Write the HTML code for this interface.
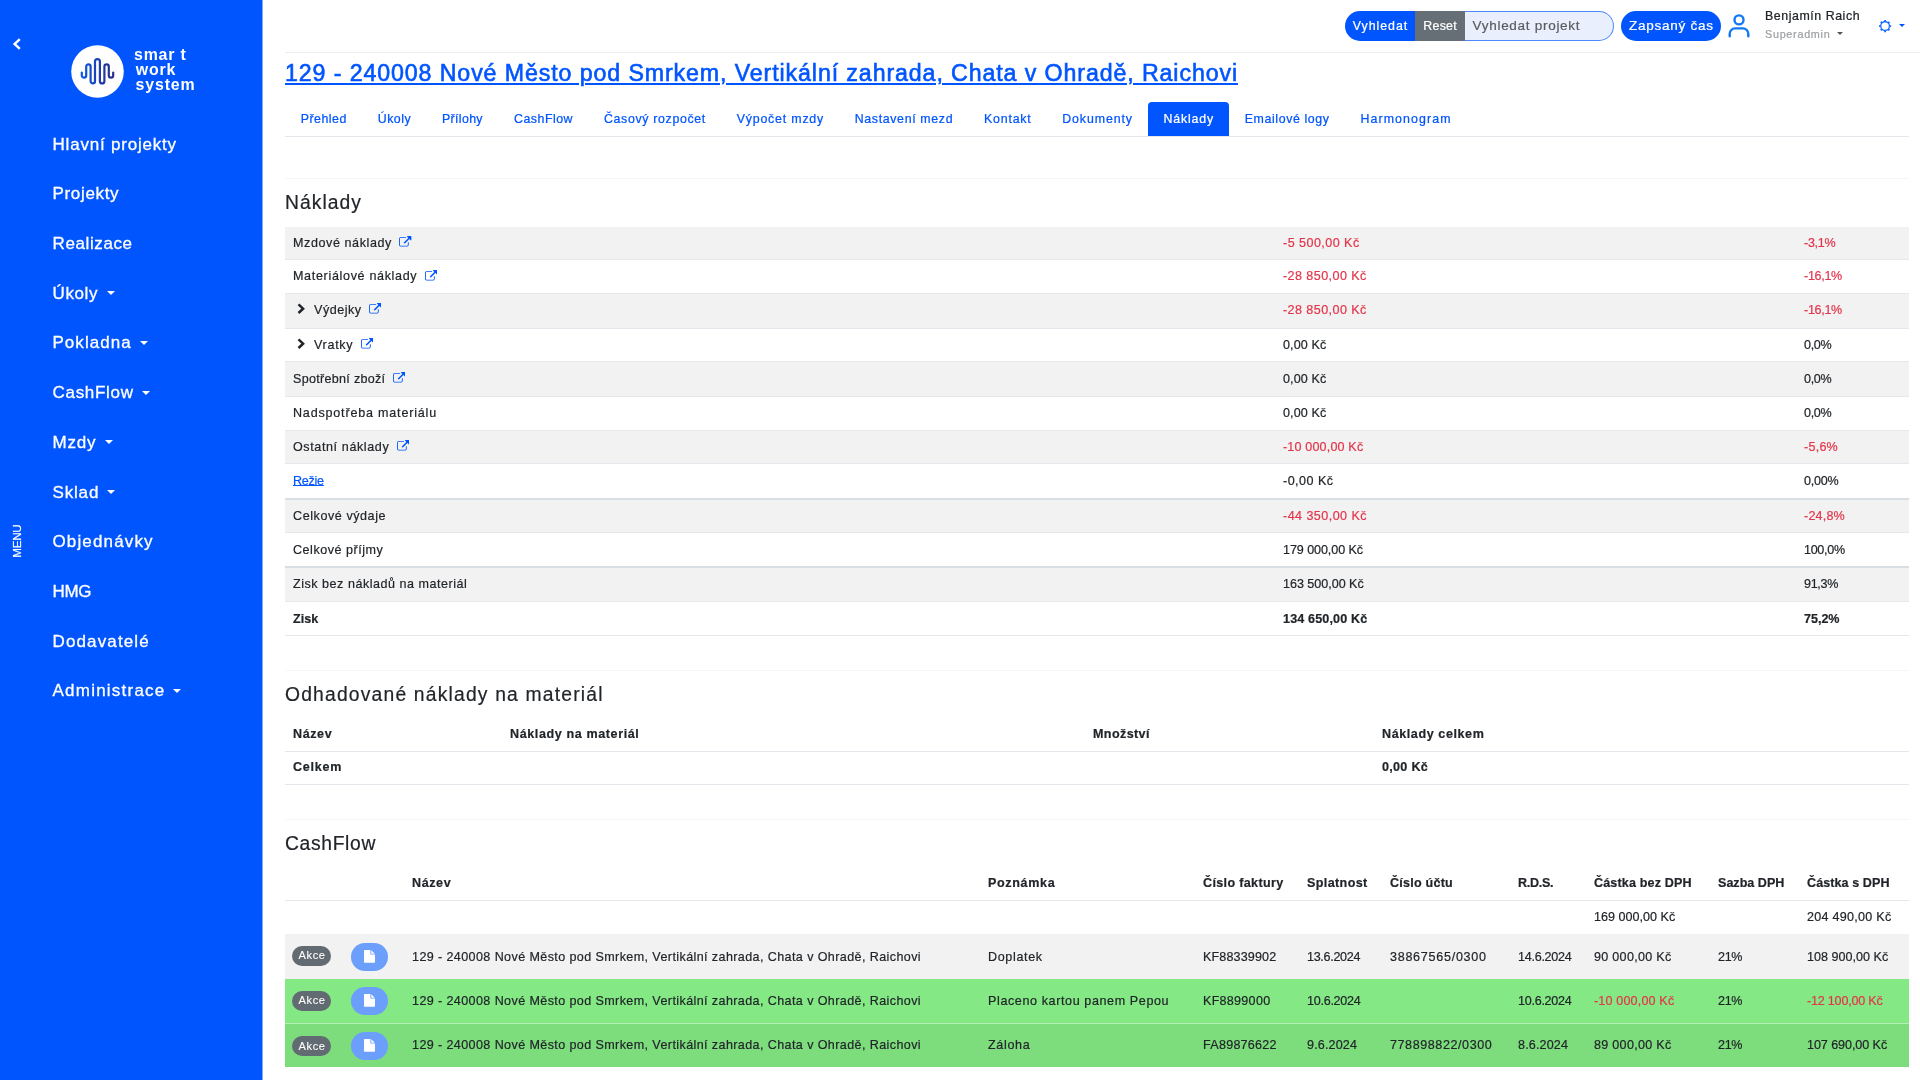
<!DOCTYPE html>
<html lang="cs">
<head>
<meta charset="utf-8">
<title>Smart Work System – Náklady</title>
<style>
*{box-sizing:border-box}
html,body{margin:0;padding:0}
body{width:1920px;height:1080px;overflow:hidden;background:#fff;color:#212529;font-family:"Liberation Sans", sans-serif;font-size:12.55px;line-height:19.5px;position:relative}
a{color:#0055ff}
#app{position:absolute;left:0;top:0;width:1920px;height:1080px;will-change:transform}
.abs{position:absolute}
.t{white-space:nowrap;-webkit-text-stroke:0.2px currentColor}
.m{-webkit-text-stroke:0.02em currentColor}
#title .m{-webkit-text-stroke-width:0.026em}
#side .m,.btn .m{-webkit-text-stroke-width:0.018em}
.akce .m{-webkit-text-stroke-width:.1px}
/* sidebar */
#side{position:absolute;left:0;top:0;width:263px;height:1080px;background:#0055ff;border-right:1px solid #7fa9ff;color:#fff}
#side .logo{position:absolute;left:71px;top:45px;width:53px;height:53px}
#side .brand{position:absolute;left:134px;top:46.5px;font-size:15.93px;line-height:15px;font-weight:700;letter-spacing:.4px}
#side .brand div{height:15px}
#side .brand .t{-webkit-text-stroke:0}
#side ul{list-style:none;margin:0;padding:0;position:absolute;left:52.5px;top:119.8px}
#side li{height:49.68px;line-height:49.68px;font-size:17px;white-space:nowrap}
.caret{display:inline-block;width:0;height:0;border-top:4.8px solid currentColor;border-left:4.8px solid transparent;border-right:4.8px solid transparent;vertical-align:middle}
#side .caret{margin-left:9px;position:relative;top:-1px}
#side .menu{position:absolute;left:16.5px;top:541px;width:0;height:0}
#side .menu div{position:absolute;left:0;top:0;transform:translate(-50%,-50%) rotate(-90deg);font-size:11.68px;line-height:12px;white-space:nowrap}
/* top bar */
.btn{position:absolute;top:11px;height:29.5px;line-height:29.5px;font-size:12.36px;color:#fff;text-align:center;background:#0055ff;white-space:nowrap}
#hline{position:absolute;left:285px;top:51.5px;width:1635px;height:1.5px;background:#eceef0}
/* title */
#title{position:absolute;left:285px;top:55px;font-size:23.18px;line-height:36px;color:#0055ff;text-decoration:underline;text-decoration-thickness:2px;text-underline-offset:1.5px;white-space:nowrap;margin:0;font-weight:400}
/* tabs */
#tabs{position:absolute;left:285px;top:101px;width:1624px;height:36px;border-bottom:1px solid #e3e6ea;display:flex}
#tabs a{display:block;margin-top:1px;height:34px;line-height:33px;padding:0 15.73px;font-size:12.36px;color:#0055ff;text-decoration:none;white-space:nowrap}
#tabs a.on{background:#0055ff;color:#fff;border-radius:4px 4px 0 0}
.hr{position:absolute;left:285px;width:1624px;height:1px;background:#f6f6f7}
h5{position:absolute;left:285px;margin:0;font-weight:400;font-size:19.31px;line-height:24px;white-space:nowrap}
table{position:absolute;left:285px;width:1624px;border-collapse:separate;border-spacing:0;table-layout:fixed}
td,th{padding:0 8px;text-align:left;vertical-align:top;white-space:nowrap;overflow:visible;font-weight:400}
th,.b{font-weight:700}
.neg{color:#e3354a}
#t1 td,#t2 td,#t2 th,#t3 td,#t3 th{height:var(--h);padding-top:var(--p,6px);border-bottom:1px solid #e4e7eb}
tr{height:var(--h)}
tr.s td{background:#f2f2f2}
tr.k td{border-bottom:2px solid #d9dee4 !important}
tr.nb td{border-bottom:0 !important}
.ext{width:12.4px;height:12.4px;fill:#0055ff;margin-left:8px;vertical-align:-2.5px}
.chev{width:8px;height:11.4px;margin:0 9px 0 4px;vertical-align:-1.8px}
#t3 tr.r td{padding-top:var(--p,12px);border-bottom:0}
#t3 tr.g1 td{background:#84e884;border-bottom:1px solid #b5efb5}
#t3 tr.g2 td{background:#7ddd7d}
.akce{position:relative;top:var(--o,0px);left:-.6px;display:inline-block;width:38.7px;height:20px;line-height:20px;border-radius:10px;background:#626a72;color:#fff;text-align:center;font-size:11.1px;vertical-align:top;margin-top:0.5px}
.doc{position:relative;top:var(--o2,0px);display:inline-block;width:37px;height:28.5px;border-radius:14.25px;background:#6c9ffb;vertical-align:top;margin-top:-3.5px;text-align:center}
.doc svg{width:11px;height:12.8px;fill:#fff;margin-top:7.4px}

tr.b td{font-weight:700}
#t1 a{text-decoration:underline}

</style>
</head>
<body>
<div id="app">
<nav id="side">
  <svg class="abs" style="left:12px;top:37.5px" width="10" height="12" viewBox="0 0 10 12"><path d="M7.8 1.2 L2.6 6 L7.8 10.8" fill="none" stroke="#fff" stroke-width="2.4"/></svg>
  <svg class="logo" viewBox="0 0 53 53">
    <defs><linearGradient id="lg" x1="0" y1="0" x2="1" y2="0"><stop offset="0" stop-color="#0a58e6"/><stop offset=".55" stop-color="#1d3fb0"/><stop offset="1" stop-color="#2b2f86"/></linearGradient></defs>
    <circle cx="26.5" cy="26.5" r="26.3" fill="#fff"/>
    <path transform="translate(-71,-45)" d="M81.8 72.5 V75.4 a2.2 2.2 0 0 0 4.4 0 V66.6 a2.2 2.2 0 0 1 4.4 0 V81.2 a2.2 2.2 0 0 0 4.4 0 V61.5 a2.45 2.45 0 0 1 4.9 0 V81.2 a2.25 2.25 0 0 0 4.5 0 V66.6 a2.2 2.2 0 0 1 4.4 0 V75.4 a2.2 2.2 0 0 0 4.4 0 V72.5" fill="none" stroke="url(#lg)" stroke-width="2.2" stroke-linecap="round"/>
  </svg>
  <div class="brand"><div><span class="t" style="letter-spacing:0.78px;margin-right:-0.78px">smar t</span></div><div style="padding-left:1.8px"><span class="t" style="letter-spacing:0.76px;margin-right:-0.76px">work</span></div><div style="padding-left:1.5px"><span class="t" style="letter-spacing:0.87px;margin-right:-0.87px">system</span></div></div>
  <ul>
    <li><span class="t m" style="letter-spacing:0.79px;margin-right:-0.79px">Hlavní projekty</span></li>
    <li><span class="t m" style="letter-spacing:0.67px;margin-right:-0.67px">Projekty</span></li>
    <li><span class="t m" style="letter-spacing:0.61px;margin-right:-0.61px">Realizace</span></li>
    <li><span class="t m" style="letter-spacing:0.62px;margin-right:-0.62px">Úkoly</span><i class="caret"></i></li>
    <li><span class="t m" style="letter-spacing:1.03px;margin-right:-1.03px">Pokladna</span><i class="caret"></i></li>
    <li><span class="t m" style="letter-spacing:0.70px;margin-right:-0.70px">CashFlow</span><i class="caret"></i></li>
    <li><span class="t m" style="letter-spacing:0.83px;margin-right:-0.83px">Mzdy</span><i class="caret"></i></li>
    <li><span class="t m" style="letter-spacing:0.83px;margin-right:-0.83px">Sklad</span><i class="caret"></i></li>
    <li><span class="t m" style="letter-spacing:1.14px;margin-right:-1.14px">Objednávky</span></li>
    <li><span class="t m" style="letter-spacing:-0.30px;margin-right:0.30px">HMG</span></li>
    <li><span class="t m" style="letter-spacing:1.13px;margin-right:-1.13px">Dodavatelé</span></li>
    <li><span class="t m" style="letter-spacing:1.23px;margin-right:-1.23px">Administrace</span><i class="caret"></i></li>
  </ul>
  <div class="menu"><div><span class="t m" style="letter-spacing:-0.30px;margin-right:0.30px;position:relative;top:-0.5px">MENU</span></div></div>
</nav>
<header>
  <div class="btn" style="left:1345px;width:70px;border-radius:15px 0 0 15px"><span class="t m" style="letter-spacing:0.97px;margin-right:-0.97px;position:relative;top:0.5px">Vyhledat</span></div>
  <div class="btn" style="left:1415px;width:50px;background:#666e76"><span class="t m" style="letter-spacing:0.24px;margin-right:-0.24px;position:relative;top:0.5px">Reset</span></div>
  <div class="abs" style="left:1465px;top:11px;width:149px;height:29.5px;line-height:27.5px;background:#eaeffd;border:1px solid #4d88ff;border-left:0;border-radius:0 15px 15px 0;padding-left:7.5px;color:#595c5f;font-size:13.52px"><span class="t" style="letter-spacing:0.71px;margin-right:-0.71px">Vyhledat projekt</span></div>
  <div class="btn" style="left:1621px;width:100px;border-radius:15px;font-size:13.52px"><span class="t m" style="letter-spacing:0.76px;margin-right:-0.76px">Zapsaný čas</span></div>
  <svg class="abs" style="left:1726.3px;top:13px" width="26" height="26" viewBox="0 0 26 26" fill="none" stroke="#0f78f2" stroke-width="2.4" stroke-linecap="round"><circle cx="13" cy="6.9" r="4.5"/><path d="M3.7 23.2 v-2.4 a5.4 5.4 0 0 1 5.4 -5.4 h7.8 a5.4 5.4 0 0 1 5.4 5.4 v2.4"/></svg>
  <div class="abs" style="left:1765px;top:6px;line-height:19.5px;font-size:12.36px"><span class="t m" style="letter-spacing:0.56px;margin-right:-0.56px;position:relative;top:0.5px">Benjamín Raich</span></div>
  <div class="abs" style="left:1765px;top:26.6px;line-height:16.5px;font-size:10.81px;color:#9a9da0"><span class="t" style="letter-spacing:0.72px;margin-right:-0.72px;position:relative;top:-0.5px">Superadmin</span><i class="caret" style="margin-left:7px;border-width:3.2px 3.2px 0 3.2px;border-top-color:#555;position:relative;top:-2.2px"></i></div>
  <svg class="abs" style="left:1877.9px;top:18.7px" width="14.2" height="14.2" viewBox="0 0 14 14"><g fill="none" stroke="#1a6dff"><circle cx="7" cy="7" r="4.3" stroke-width="1.3"/><g stroke-width="1.9"><path d="M7 1v1.6M7 11.4V13M1 7h1.6M11.4 7H13M2.76 2.76l1.13 1.13M10.1 10.1l1.13 1.13M2.76 11.24l1.13-1.13M10.1 3.9l1.13-1.13"/></g></g></svg>
  <i class="caret abs" style="left:1898.5px;top:24px;border-width:3.4px 3.4px 0 3.4px;color:#0055ff"></i>
  <div id="hline"></div>
</header>
<main>
  <h1 id="title"><span class="t m" style="letter-spacing:0.90px;margin-right:-0.90px">129 - 240008 Nové Město pod Smrkem, Vertikální zahrada, Chata v Ohradě, Raichovi</span></h1>
  <div id="tabs">
    <a><span class="t m" style="letter-spacing:0.51px;margin-right:-0.51px;position:relative;top:0.5px">Přehled</span></a>
    <a><span class="t m" style="letter-spacing:0.46px;margin-right:-0.46px;position:relative;top:0.5px">Úkoly</span></a>
    <a><span class="t m" style="letter-spacing:0.34px;margin-right:-0.34px;position:relative;top:0.5px">Přílohy</span></a>
    <a><span class="t m" style="letter-spacing:0.51px;margin-right:-0.51px;position:relative;top:0.5px">CashFlow</span></a>
    <a><span class="t m" style="letter-spacing:0.66px;margin-right:-0.66px;position:relative;top:0.5px">Časový rozpočet</span></a>
    <a><span class="t m" style="letter-spacing:0.81px;margin-right:-0.81px;position:relative;top:0.5px">Výpočet mzdy</span></a>
    <a><span class="t m" style="letter-spacing:0.66px;margin-right:-0.66px;position:relative;top:0.5px">Nastavení mezd</span></a>
    <a><span class="t m" style="letter-spacing:0.81px;margin-right:-0.81px;position:relative;top:0.5px">Kontakt</span></a>
    <a><span class="t m" style="letter-spacing:0.90px;margin-right:-0.90px;position:relative;top:0.5px">Dokumenty</span></a>
    <a class="on"><span class="t m" style="letter-spacing:0.87px;margin-right:-0.87px;position:relative;top:0.5px">Náklady</span></a>
    <a><span class="t m" style="letter-spacing:0.61px;margin-right:-0.61px;position:relative;top:0.5px">Emailové logy</span></a>
    <a><span class="t m" style="letter-spacing:1.11px;margin-right:-1.11px;position:relative;top:0.5px">Harmonogram</span></a>
  </div>

  <div class="hr" style="top:178px"></div>
  <h5 style="top:191px"><span class="t" style="letter-spacing:1.05px;margin-right:-1.05px">Náklady</span></h5>
  <table id="t1" style="top:227px">
    <colgroup><col style="width:990px"><col style="width:521px"><col style="width:113px"></colgroup>
    <tr class="s" style="--h:33px"><td><span class="t" style="letter-spacing:0.59px;margin-right:-0.59px;position:relative;top:0.5px">Mzdové náklady</span><svg class="ext" viewBox="0 0 1792 1792"><path d="M1408 928v320q0 119-84.500 203.500t-203.500 84.500h-832q-119 0-203.500-84.500t-84.500-203.500v-832q0-119 84.500-203.500t203.500-84.500h704q14 0 23 9t9 23v64q0 14-9 23t-23 9h-704q-66 0-113 47t-47 113v832q0 66 47 113t113 47h832q66 0 113-47t47-113v-320q0-14 9-23t23-9h64q14 0 23 9t9 23zM1792 64v512q0 26-19 45t-45 19-45-19l-176-176-652 652q-10 10-23 10t-23-10l-114-114q-10-10-10-23t10-23l652-652-176-176q-19-19-19-45t19-45 45-19h512q26 0 45 19t19 45z"/></svg></td><td class="neg"><span class="t" style="letter-spacing:0.46px;margin-right:-0.46px;position:relative;top:0.5px">-5 500,00 Kč</span></td><td class="neg"><span class="t" style="letter-spacing:-0.30px;margin-right:0.30px;position:relative;top:0.5px">-3,1%</span></td></tr>
    <tr style="--h:34px;--p:6.6px"><td><span class="t" style="letter-spacing:0.67px;margin-right:-0.67px;position:relative;top:0.5px">Materiálové náklady</span><svg class="ext" viewBox="0 0 1792 1792"><path d="M1408 928v320q0 119-84.500 203.500t-203.500 84.500h-832q-119 0-203.500-84.500t-84.500-203.500v-832q0-119 84.500-203.500t203.500-84.500h704q14 0 23 9t9 23v64q0 14-9 23t-23 9h-704q-66 0-113 47t-47 113v832q0 66 47 113t113 47h832q66 0 113-47t47-113v-320q0-14 9-23t23-9h64q14 0 23 9t9 23zM1792 64v512q0 26-19 45t-45 19-45-19l-176-176-652 652q-10 10-23 10t-23-10l-114-114q-10-10-10-23t10-23l652-652-176-176q-19-19-19-45t19-45 45-19h512q26 0 45 19t19 45z"/></svg></td><td class="neg"><span class="t" style="letter-spacing:0.43px;margin-right:-0.43px;position:relative;top:0.5px">-28 850,00 Kč</span></td><td class="neg"><span class="t" style="letter-spacing:-0.30px;margin-right:0.30px;position:relative;top:0.5px">-16,1%</span></td></tr>
    <tr class="s" style="--h:35px"><td><svg class="chev" viewBox="0 0 8 11"><path d="M1.5 1.2 L6.1 5.5 L1.5 9.8" fill="none" stroke="#212529" stroke-width="2.5"/></svg><span class="t" style="letter-spacing:0.52px;margin-right:-0.52px;position:relative;top:0.5px">Výdejky</span><svg class="ext" viewBox="0 0 1792 1792"><path d="M1408 928v320q0 119-84.500 203.500t-203.500 84.500h-832q-119 0-203.500-84.500t-84.500-203.500v-832q0-119 84.500-203.500t203.500-84.500h704q14 0 23 9t9 23v64q0 14-9 23t-23 9h-704q-66 0-113 47t-47 113v832q0 66 47 113t113 47h832q66 0 113-47t47-113v-320q0-14 9-23t23-9h64q14 0 23 9t9 23zM1792 64v512q0 26-19 45t-45 19-45-19l-176-176-652 652q-10 10-23 10t-23-10l-114-114q-10-10-10-23t10-23l652-652-176-176q-19-19-19-45t19-45 45-19h512q26 0 45 19t19 45z"/></svg></td><td class="neg"><span class="t" style="letter-spacing:0.43px;margin-right:-0.43px;position:relative;top:0.5px">-28 850,00 Kč</span></td><td class="neg"><span class="t" style="letter-spacing:-0.30px;margin-right:0.30px;position:relative;top:0.5px">-16,1%</span></td></tr>
    <tr style="--h:33px"><td><svg class="chev" viewBox="0 0 8 11"><path d="M1.5 1.2 L6.1 5.5 L1.5 9.8" fill="none" stroke="#212529" stroke-width="2.5"/></svg><span class="t" style="letter-spacing:0.70px;margin-right:-0.70px;position:relative;top:0.5px">Vratky</span><svg class="ext" viewBox="0 0 1792 1792"><path d="M1408 928v320q0 119-84.500 203.500t-203.500 84.500h-832q-119 0-203.500-84.500t-84.500-203.500v-832q0-119 84.500-203.500t203.500-84.500h704q14 0 23 9t9 23v64q0 14-9 23t-23 9h-704q-66 0-113 47t-47 113v832q0 66 47 113t113 47h832q66 0 113-47t47-113v-320q0-14 9-23t23-9h64q14 0 23 9t9 23zM1792 64v512q0 26-19 45t-45 19-45-19l-176-176-652 652q-10 10-23 10t-23-10l-114-114q-10-10-10-23t10-23l652-652-176-176q-19-19-19-45t19-45 45-19h512q26 0 45 19t19 45z"/></svg></td><td><span class="t" style="letter-spacing:0.13px;margin-right:-0.13px;position:relative;top:0.5px">0,00 Kč</span></td><td><span class="t" style="letter-spacing:-0.30px;margin-right:0.30px;position:relative;top:0.5px">0,0%</span></td></tr>
    <tr class="s" style="--h:35px;--p:7px"><td><span class="t" style="letter-spacing:0.30px;margin-right:-0.30px;position:relative;top:0.5px">Spotřební zboží</span><svg class="ext" viewBox="0 0 1792 1792"><path d="M1408 928v320q0 119-84.500 203.500t-203.500 84.500h-832q-119 0-203.500-84.500t-84.500-203.500v-832q0-119 84.500-203.500t203.500-84.500h704q14 0 23 9t9 23v64q0 14-9 23t-23 9h-704q-66 0-113 47t-47 113v832q0 66 47 113t113 47h832q66 0 113-47t47-113v-320q0-14 9-23t23-9h64q14 0 23 9t9 23zM1792 64v512q0 26-19 45t-45 19-45-19l-176-176-652 652q-10 10-23 10t-23-10l-114-114q-10-10-10-23t10-23l652-652-176-176q-19-19-19-45t19-45 45-19h512q26 0 45 19t19 45z"/></svg></td><td><span class="t" style="letter-spacing:0.13px;margin-right:-0.13px;position:relative;top:0.5px">0,00 Kč</span></td><td><span class="t" style="letter-spacing:-0.30px;margin-right:0.30px;position:relative;top:0.5px">0,0%</span></td></tr>
    <tr style="--h:34px"><td><span class="t" style="letter-spacing:0.81px;margin-right:-0.81px;position:relative;top:0.5px">Nadspotřeba materiálu</span></td><td><span class="t" style="letter-spacing:0.13px;margin-right:-0.13px;position:relative;top:0.5px">0,00 Kč</span></td><td><span class="t" style="letter-spacing:-0.30px;margin-right:0.30px;position:relative;top:0.5px">0,0%</span></td></tr>
    <tr class="s" style="--h:33px"><td><span class="t" style="letter-spacing:0.61px;margin-right:-0.61px;position:relative;top:0.5px">Ostatní náklady</span><svg class="ext" viewBox="0 0 1792 1792"><path d="M1408 928v320q0 119-84.500 203.500t-203.500 84.500h-832q-119 0-203.500-84.500t-84.500-203.500v-832q0-119 84.500-203.500t203.500-84.500h704q14 0 23 9t9 23v64q0 14-9 23t-23 9h-704q-66 0-113 47t-47 113v832q0 66 47 113t113 47h832q66 0 113-47t47-113v-320q0-14 9-23t23-9h64q14 0 23 9t9 23zM1792 64v512q0 26-19 45t-45 19-45-19l-176-176-652 652q-10 10-23 10t-23-10l-114-114q-10-10-10-23t10-23l652-652-176-176q-19-19-19-45t19-45 45-19h512q26 0 45 19t19 45z"/></svg></td><td class="neg"><span class="t" style="letter-spacing:0.17px;margin-right:-0.17px;position:relative;top:0.5px">-10 000,00 Kč</span></td><td class="neg"><span class="t" style="letter-spacing:0.25px;margin-right:-0.25px;position:relative;top:0.5px">-5,6%</span></td></tr>
    <tr class="k" style="--h:36px;--p:7px"><td><a><span class="t" style="letter-spacing:-0.25px;margin-right:0.25px;position:relative;top:0.5px">Režie</span></a></td><td><span class="t" style="letter-spacing:0.47px;margin-right:-0.47px;position:relative;top:0.5px">-0,00 Kč</span></td><td><span class="t" style="letter-spacing:-0.24px;margin-right:0.24px;position:relative;top:0.5px">0,00%</span></td></tr>
    <tr class="s" style="--h:33px"><td><span class="t" style="letter-spacing:0.57px;margin-right:-0.57px;position:relative;top:0.5px">Celkové výdaje</span></td><td class="neg"><span class="t" style="letter-spacing:0.45px;margin-right:-0.45px;position:relative;top:0.5px">-44 350,00 Kč</span></td><td class="neg"><span class="t" style="letter-spacing:0.20px;margin-right:-0.20px;position:relative;top:0.5px">-24,8%</span></td></tr>
    <tr class="k" style="--h:35px;--p:7px"><td><span class="t" style="letter-spacing:0.53px;margin-right:-0.53px;position:relative;top:0.5px">Celkové příjmy</span></td><td><span class="t" style="letter-spacing:-0.07px;margin-right:0.07px;position:relative;top:0.5px">179 000,00 Kč</span></td><td><span class="t" style="letter-spacing:-0.30px;margin-right:0.30px;position:relative;top:0.5px">100,0%</span></td></tr>
    <tr class="s" style="--h:34px"><td><span class="t" style="letter-spacing:0.52px;margin-right:-0.52px;position:relative;top:0.5px">Zisk bez nákladů na materiál</span></td><td><span class="t" style="letter-spacing:-0.02px;margin-right:0.02px;position:relative;top:0.5px">163 500,00 Kč</span></td><td><span class="t" style="letter-spacing:-0.30px;margin-right:0.30px;position:relative;top:0.5px">91,3%</span></td></tr>
    <tr class="b" style="--h:34px;--p:7px"><td><span class="t" style="letter-spacing:0.03px;margin-right:-0.03px;position:relative;top:0.5px">Zisk</span></td><td><span class="t" style="letter-spacing:0.16px;margin-right:-0.16px;position:relative;top:0.5px">134 650,00 Kč</span></td><td><span class="t" style="letter-spacing:-0.02px;margin-right:0.02px;position:relative;top:0.5px">75,2%</span></td></tr>
  </table>

  <div class="hr" style="top:670px"></div>
  <h5 style="top:682.8px"><span class="t" style="letter-spacing:1.18px;margin-right:-1.18px">Odhadované náklady na materiál</span></h5>
  <table id="t2" style="top:717px">
    <colgroup><col style="width:217px"><col style="width:583px"><col style="width:289px"><col style="width:535px"></colgroup>
    <tr style="--h:35px;--p:7px"><th><span class="t" style="letter-spacing:0.59px;margin-right:-0.59px;position:relative;top:0.5px">Název</span></th><th><span class="t" style="letter-spacing:0.61px;margin-right:-0.61px;position:relative;top:0.5px">Náklady na materiál</span></th><th><span class="t" style="letter-spacing:0.40px;margin-right:-0.40px;position:relative;top:0.5px">Množství</span></th><th><span class="t" style="letter-spacing:0.59px;margin-right:-0.59px;position:relative;top:0.5px">Náklady celkem</span></th></tr>
    <tr class="b" style="--h:33px;--p:5.8px"><td><span class="t" style="letter-spacing:0.74px;margin-right:-0.74px;position:relative;top:0.5px">Celkem</span></td><td></td><td></td><td><span class="t" style="letter-spacing:0.31px;margin-right:-0.31px;position:relative;top:0.5px">0,00 Kč</span></td></tr>
  </table>

  <div class="hr" style="top:819px"></div>
  <h5 style="top:832px"><span class="t" style="letter-spacing:0.65px;margin-right:-0.65px">CashFlow</span></h5>
  <table id="t3" style="top:866px">
    <colgroup><col style="width:58px"><col style="width:61px"><col style="width:576px"><col style="width:215px"><col style="width:104px"><col style="width:83px"><col style="width:128px"><col style="width:76px"><col style="width:124px"><col style="width:89px"><col style="width:110px"></colgroup>
    <tr style="--h:35px;--p:7.2px"><th></th><th></th><th><span class="t" style="letter-spacing:0.59px;margin-right:-0.59px;position:relative;top:0.5px">Název</span></th><th><span class="t" style="letter-spacing:0.65px;margin-right:-0.65px;position:relative;top:0.5px">Poznámka</span></th><th><span class="t" style="letter-spacing:0.35px;margin-right:-0.35px;position:relative;top:0.5px">Číslo faktury</span></th><th><span class="t" style="letter-spacing:0.39px;margin-right:-0.39px;position:relative;top:0.5px">Splatnost</span></th><th><span class="t" style="letter-spacing:0.23px;margin-right:-0.23px;position:relative;top:0.5px">Číslo účtu</span></th><th><span class="t" style="letter-spacing:-0.30px;margin-right:0.30px;position:relative;top:0.5px">R.D.S.</span></th><th><span class="t" style="letter-spacing:0.15px;margin-right:-0.15px;position:relative;top:0.5px">Částka bez DPH</span></th><th><span class="t" style="letter-spacing:0.01px;margin-right:-0.01px;position:relative;top:0.5px">Sazba DPH</span></th><th><span class="t" style="letter-spacing:0.08px;margin-right:-0.08px;position:relative;top:0.5px">Částka s DPH</span></th></tr>
    <tr class="nb" style="--h:33px"><td></td><td></td><td></td><td></td><td></td><td></td><td></td><td></td><td><span class="t" style="letter-spacing:0.02px;margin-right:-0.02px;position:relative;top:0.5px">169 000,00 Kč</span></td><td></td><td><span class="t" style="letter-spacing:0.28px;margin-right:-0.28px;position:relative;top:0.5px">204 490,00 Kč</span></td></tr>
    <tr class="r s" style="--h:45px;--p:13.2px;--o:-1.8px;--o2:-1px"><td><span class="akce"><span class="t m" style="letter-spacing:0.64px;margin-right:-0.64px;position:relative;top:-0.5px">Akce</span></span></td><td><span class="doc"><svg viewBox="0 0 1536 1792"><path d="M1024 512v-472q22 14 36 28l408 408q14 14 28 36h-472zM896 544q0 40 28 68t68 28h544v1056q0 40-28 68t-68 28h-1344q-40 0-68-28t-28-68v-1600q0-40 28-68t68-28h800v544z"/></svg></span></td><td><span class="t" style="letter-spacing:0.40px;margin-right:-0.40px;position:relative;top:0.5px">129 - 240008 Nové Město pod Smrkem, Vertikální zahrada, Chata v Ohradě, Raichovi</span></td><td><span class="t" style="letter-spacing:0.66px;margin-right:-0.66px;position:relative;top:0.5px">Doplatek</span></td><td><span class="t" style="letter-spacing:0.15px;margin-right:-0.15px;position:relative;top:0.5px">KF88339902</span></td><td><span class="t" style="letter-spacing:-0.30px;margin-right:0.30px;position:relative;top:0.5px">13.6.2024</span></td><td><span class="t" style="letter-spacing:0.73px;margin-right:-0.73px;position:relative;top:0.5px">38867565/0300</span></td><td><span class="t" style="letter-spacing:-0.26px;margin-right:0.26px;position:relative;top:0.5px">14.6.2024</span></td><td><span class="t" style="letter-spacing:0.30px;margin-right:-0.30px;position:relative;top:0.5px">90 000,00 Kč</span></td><td><span class="t" style="letter-spacing:-0.30px;margin-right:0.30px;position:relative;top:0.5px">21%</span></td><td><span class="t" style="letter-spacing:0.02px;margin-right:-0.02px;position:relative;top:0.5px">108 900,00 Kč</span></td></tr>
    <tr class="r g1" style="--h:45px;--o:-.7px;--o2:-.7px"><td><span class="akce"><span class="t m" style="letter-spacing:0.64px;margin-right:-0.64px;position:relative;top:-0.5px">Akce</span></span></td><td><span class="doc"><svg viewBox="0 0 1536 1792"><path d="M1024 512v-472q22 14 36 28l408 408q14 14 28 36h-472zM896 544q0 40 28 68t68 28h544v1056q0 40-28 68t-68 28h-1344q-40 0-68-28t-28-68v-1600q0-40 28-68t68-28h800v544z"/></svg></span></td><td><span class="t" style="letter-spacing:0.40px;margin-right:-0.40px;position:relative;top:0.5px">129 - 240008 Nové Město pod Smrkem, Vertikální zahrada, Chata v Ohradě, Raichovi</span></td><td><span class="t" style="letter-spacing:0.61px;margin-right:-0.61px;position:relative;top:0.5px">Placeno kartou panem Pepou</span></td><td><span class="t" style="letter-spacing:0.28px;margin-right:-0.28px;position:relative;top:0.5px">KF8899000</span></td><td><span class="t" style="letter-spacing:-0.26px;margin-right:0.26px;position:relative;top:0.5px">10.6.2024</span></td><td></td><td><span class="t" style="letter-spacing:-0.26px;margin-right:0.26px;position:relative;top:0.5px">10.6.2024</span></td><td class="neg"><span class="t" style="letter-spacing:0.17px;margin-right:-0.17px;position:relative;top:0.5px">-10 000,00 Kč</span></td><td><span class="t" style="letter-spacing:-0.30px;margin-right:0.30px;position:relative;top:0.5px">21%</span></td><td class="neg"><span class="t" style="letter-spacing:-0.20px;margin-right:0.20px;position:relative;top:0.5px">-12 100,00 Kč</span></td></tr>
    <tr class="r g2" style="--h:43px;--p:11px;--o:.6px;--o2:0px"><td><span class="akce"><span class="t m" style="letter-spacing:0.64px;margin-right:-0.64px;position:relative;top:-0.5px">Akce</span></span></td><td><span class="doc"><svg viewBox="0 0 1536 1792"><path d="M1024 512v-472q22 14 36 28l408 408q14 14 28 36h-472zM896 544q0 40 28 68t68 28h544v1056q0 40-28 68t-68 28h-1344q-40 0-68-28t-28-68v-1600q0-40 28-68t68-28h800v544z"/></svg></span></td><td><span class="t" style="letter-spacing:0.40px;margin-right:-0.40px;position:relative;top:0.5px">129 - 240008 Nové Město pod Smrkem, Vertikální zahrada, Chata v Ohradě, Raichovi</span></td><td><span class="t" style="letter-spacing:0.66px;margin-right:-0.66px;position:relative;top:0.5px">Záloha</span></td><td><span class="t" style="letter-spacing:0.27px;margin-right:-0.27px;position:relative;top:0.5px">FA89876622</span></td><td><span class="t" style="letter-spacing:0.15px;margin-right:-0.15px;position:relative;top:0.5px">9.6.2024</span></td><td><span class="t" style="letter-spacing:0.58px;margin-right:-0.58px;position:relative;top:0.5px">778898822/0300</span></td><td><span class="t" style="letter-spacing:0.15px;margin-right:-0.15px;position:relative;top:0.5px">8.6.2024</span></td><td><span class="t" style="letter-spacing:0.30px;margin-right:-0.30px;position:relative;top:0.5px">89 000,00 Kč</span></td><td><span class="t" style="letter-spacing:-0.30px;margin-right:0.30px;position:relative;top:0.5px">21%</span></td><td><span class="t" style="letter-spacing:-0.06px;margin-right:0.06px;position:relative;top:0.5px">107 690,00 Kč</span></td></tr>
  </table>
</main>

</div>
</body>
</html>
